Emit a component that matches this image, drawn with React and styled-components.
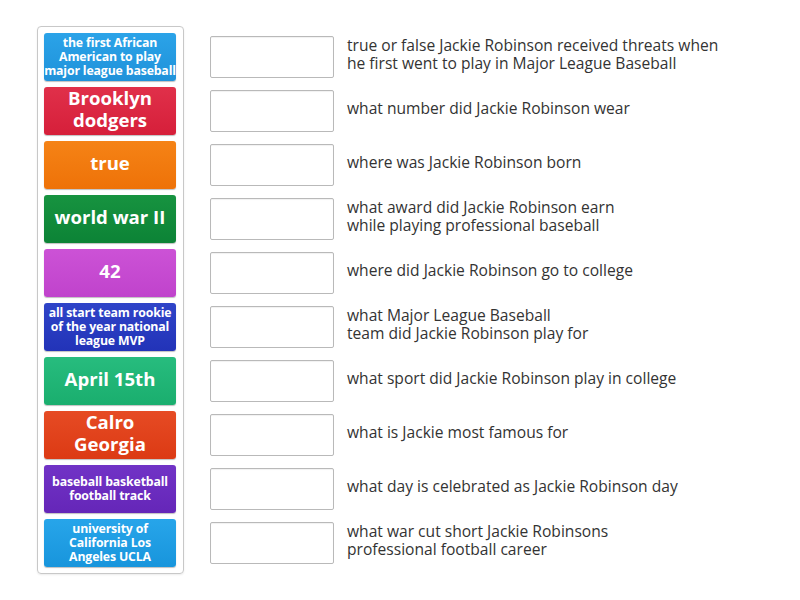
import React from "react";
import styled, { createGlobalStyle } from "styled-components";

const Global = createGlobalStyle`
  html, body { margin: 0; padding: 0; background: #fff; }
  body { font-family: "Open Sans", "Noto Sans", sans-serif; }
`;

const Page = styled.div`
  width: 800px;
  height: 600px;
  box-sizing: border-box;
  padding: 26px 0 0 37px;
  display: flex;
  align-items: flex-start;
  gap: 26px;
`;

const Panel = styled.div`
  width: 147px;
  box-sizing: border-box;
  border: 1px solid #c8c8c8;
  border-radius: 4px;
  padding: 6px;
  display: flex;
  flex-direction: column;
  gap: 6px;
  box-shadow: 0 1px 2px rgba(0,0,0,0.08);
`;

const Tile = styled.div`
  height: 48px;
  width: 132px;
  box-sizing: border-box;
  border-radius: 3px;
  background: linear-gradient(${p => p.$c}, ${p => p.$d});
  box-shadow: 0 1px 1px rgba(0,0,0,0.25);
  color: #fff;
  font-weight: 700;
  font-size: ${p => (p.$small ? "12.3px" : "18.6px")};
  line-height: ${p => (p.$small ? "14px" : "22px")};
  display: flex;
  align-items: center;
  justify-content: center;
  text-align: center;
  white-space: nowrap;
  padding: 0 0 ${p => (p.$small ? "1px" : "4px")} 0;
  letter-spacing: ${p => (p.$small ? "-0.15px" : "0")};
`;

const List = styled.div`
  display: flex;
  flex-direction: column;
  gap: 12px;
  padding-top: 10px;
`;

const Row = styled.div`
  display: flex;
  align-items: center;
  height: 42px;
  gap: 13px;
`;

const Slot = styled.div`
  width: 124px;
  height: 42px;
  box-sizing: border-box;
  border: 1px solid #b9b9b9;
  border-radius: 2px;
  background: #fff;
  box-shadow: inset 0 1px 1px rgba(0,0,0,0.06);
  flex-shrink: 0;
`;

const Question = styled.div`
  font-size: 15.6px;
  line-height: 18px;
  color: #333;
  padding-bottom: 6px;
  white-space: nowrap;
`;

const tiles = [
  { t: ["the first African", "American to play", "major league baseball"], c: "#2ba3e8", d: "#1f92da", s: true },
  { t: ["Brooklyn", "dodgers"], c: "#e0304a", d: "#d61f3a" },
  { t: ["true"], c: "#f58316", d: "#ee7208" },
  { t: ["world war II"], c: "#179340", d: "#0c8336" },
  { t: ["42"], c: "#cc52d6", d: "#c043cc" },
  { t: ["all start team rookie", "of the year national", "league MVP"], c: "#2f44c8", d: "#2233b8", s: true },
  { t: ["April 15th"], c: "#27bc7e", d: "#1aae6e" },
  { t: ["Calro", "Georgia"], c: "#e64b24", d: "#dc3a14" },
  { t: ["baseball basketball", "football track"], c: "#7133c6", d: "#6526b8", s: true },
  { t: ["university of", "California Los", "Angeles UCLA"], c: "#27a5ea", d: "#1895dc", s: true },
];

const questions = [
  ["true or false Jackie Robinson received threats when", "he first went to play in Major League Baseball"],
  ["what number did Jackie Robinson wear"],
  ["where was Jackie Robinson born"],
  ["what award did Jackie Robinson earn", "while playing professional baseball"],
  ["where did Jackie Robinson go to college"],
  ["what Major League Baseball", "team did Jackie Robinson play for"],
  ["what sport did Jackie Robinson play in college"],
  ["what is Jackie most famous for"],
  ["what day is celebrated as Jackie Robinson day"],
  ["what war cut short Jackie Robinsons", "professional football career"],
];

const Lines = ({ lines }) =>
  lines.map((l, i) => (
    <React.Fragment key={i}>
      {l}
      {i < lines.length - 1 && <br />}
    </React.Fragment>
  ));

export default function App() {
  return (
    <>
      <Global />
      <Page>
        <Panel>
          {tiles.map((t, i) => (
            <Tile key={i} $c={t.c} $d={t.d} $small={t.s}>
              <span><Lines lines={t.t} /></span>
            </Tile>
          ))}
        </Panel>
        <List>
          {questions.map((q, i) => (
            <Row key={i}>
              <Slot />
              <Question><Lines lines={q} /></Question>
            </Row>
          ))}
        </List>
      </Page>
    </>
  );
}
